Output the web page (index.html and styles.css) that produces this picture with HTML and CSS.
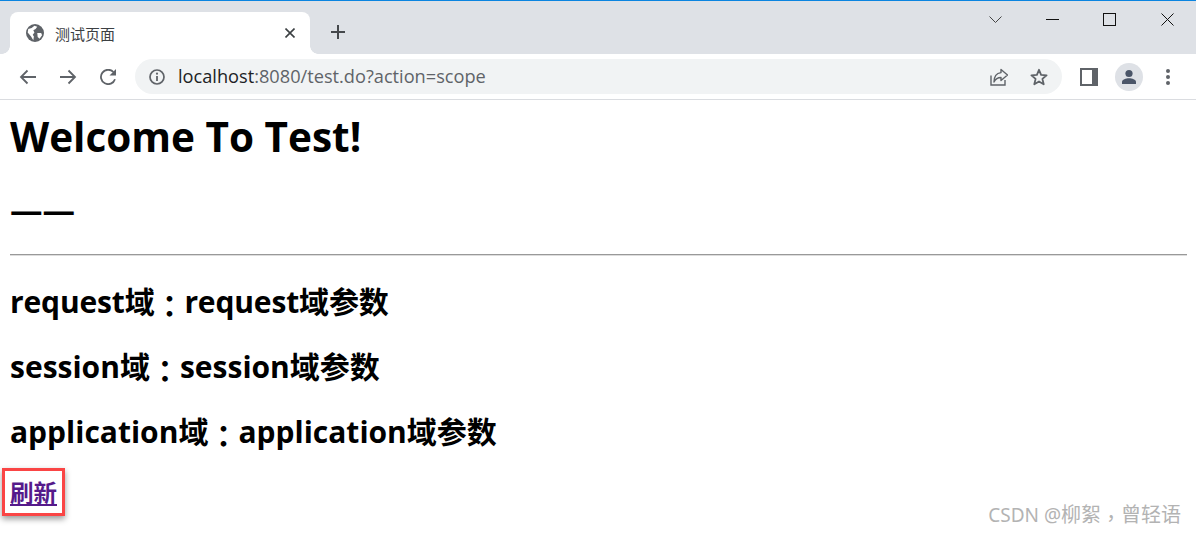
FILE: index.html
```html
<!DOCTYPE html>
<html lang="zh-CN">
<head>
    <meta charset="UTF-8">
    <title>测试页面</title>
    <link rel="stylesheet" href="styles.css">
</head>
<body>

<!-- Tab strip -->
<div class="tabstrip">
    <div class="tab">
        <svg class="tab-icon" width="18" height="18" viewBox="0 0 16 16">
            <circle cx="8" cy="8" r="8" fill="#5f6368"/>
            <path d="M2 4.5 5 3.5 7.5 1.5 10 2.5 8.5 4.5 6.5 5.5 7.5 7.5 6 9.5 7 11 6.5 14.5 4.5 11 1.5 7.5Z" fill="#fff"/>
            <path d="M10 8h3.5l.8 2-2.3 3-1.6-1.5Z" fill="#fff"/>
        </svg>
        <span class="tab-title">测试页面</span>
        <svg class="tab-close" width="10" height="10" viewBox="0 0 10 10">
            <path d="M0.5 0.5 9.5 9.5M9.5 0.5 0.5 9.5" stroke="#3c4043" stroke-width="1.6"/>
        </svg>
    </div>
    <svg class="new-tab" width="14" height="14" viewBox="0 0 14 14">
        <path d="M7 0V14M0 7H14" stroke="#45484c" stroke-width="2"/>
    </svg>
    <div class="window-btns">
        <svg class="win-chevron" width="13" height="7" viewBox="0 0 13 7">
            <path d="M0.5 0.5 6.5 6.5 12.5 0.5" fill="none" stroke="#444" stroke-width="1"/>
        </svg>
        <svg class="win-min" width="13" height="13" viewBox="0 0 13 13">
            <path d="M0 6.5H13" stroke="#111" stroke-width="1"/>
        </svg>
        <svg class="win-max" width="13" height="13" viewBox="0 0 13 13">
            <rect x="0.5" y="0.5" width="12" height="12" fill="none" stroke="#111" stroke-width="1"/>
        </svg>
        <svg class="win-close" width="13" height="13" viewBox="0 0 13 13">
            <path d="M0.5 0.5 12.5 12.5M12.5 0.5 0.5 12.5" stroke="#111" stroke-width="1"/>
        </svg>
    </div>
</div>

<!-- Toolbar -->
<div class="toolbar">
    <svg class="nav-icon" width="18" height="16" viewBox="0 0 18 16">
        <path d="M17 8H2M8.5 1.5 2 8l6.5 6.5" fill="none" stroke="#5f6368" stroke-width="1.8"/>
    </svg>
    <svg class="nav-icon" width="18" height="16" viewBox="0 0 18 16">
        <path d="M1 8H16M9.5 1.5 16 8l-6.5 6.5" fill="none" stroke="#5f6368" stroke-width="1.8"/>
    </svg>
    <svg class="nav-icon" width="18" height="16" viewBox="0 0 18 16">
        <path d="M16 10.2A7.2 7.2 0 1 1 14.4 3" fill="none" stroke="#5f6368" stroke-width="1.8"/>
        <path d="M17 0V6.5H10.5Z" fill="#5f6368"/>
    </svg>
    <div class="omnibox">
        <svg class="info-icon" width="16" height="16" viewBox="0 0 16 16">
            <circle cx="8" cy="8" r="7" fill="none" stroke="#5f6368" stroke-width="1.7"/>
            <path d="M8 7V12" stroke="#5f6368" stroke-width="1.8"/>
            <circle cx="8" cy="4.7" r="1.1" fill="#5f6368"/>
        </svg>
        <span class="url"><span class="url-host">localhost</span>:8080/test.do?action=scope</span>
        <svg class="share-icon" width="18" height="18" viewBox="0 0 18 18">
            <path d="M1 7.5V17H15V12" fill="none" stroke="#5f6368" stroke-width="1.4"/>
            <path d="M11 1.5 17.5 7 11 12.5V9.5C8 9.5 5.5 11 4 14 4 9 6.5 5.2 11 4.6Z" fill="none" stroke="#5f6368" stroke-width="1.4" stroke-linejoin="round"/>
        </svg>
        <svg class="star-icon" width="18" height="18" viewBox="0 0 18 18">
            <path d="M9 1.8 11.1 6.8 16.6 7.3 12.4 10.9 13.7 16.3 9 13.4 4.3 16.3 5.6 10.9 1.4 7.3 6.9 6.8Z" fill="none" stroke="#5f6368" stroke-width="1.8" stroke-linejoin="round"/>
        </svg>
    </div>
    <div class="panel-icon"></div>
    <div class="avatar">
        <svg width="18" height="18" viewBox="0 0 18 18">
            <circle cx="9" cy="5.5" r="3.6" fill="#4a5568"/>
            <path d="M2 16V14C2 11.5 6 10.3 9 10.3S16 11.5 16 14V16Z" fill="#4a5568"/>
        </svg>
    </div>
    <div class="menu-dots"><i></i><i></i><i></i></div>
</div>

<!-- Page content -->
<div class="content">
    <h1>Welcome To Test!</h1>
    <h2 class="dash">——</h2>
    <hr>
    <h2 class="row-request">request域<span class="punct" lang="zh-TW">：</span>request域参数</h2>
    <h2>session域<span class="punct" lang="zh-TW">：</span>session域参数</h2>
    <h2>application域<span class="punct" lang="zh-TW">：</span>application域参数</h2>
    <h2 class="refresh"><a href="#">刷新</a></h2>
</div>

<div class="watermark"><span class="wm-latin">CSDN @</span>柳絮<span class="punct" lang="zh-TW">，</span>曾轻语</div>

</body>
</html>
```

FILE: styles.css
```css
html, body {
    margin: 0;
    padding: 0;
    height: 533px;
    overflow: hidden;
}
body {
    position: relative;
    background-color: #fff;
    font-family: "Open Sans", "Noto Sans CJK SC", sans-serif;
    color: #000;
}
svg {
    display: block;
    flex: none;
}

/* Tab strip */
.tabstrip {
    display: flex;
    align-items: flex-end;
    height: 53px;
    background-color: #dee1e6;
    border-top: 1px solid #0a84e0;
}
.tab {
    position: relative;
    display: flex;
    align-items: center;
    width: 300px;
    height: 42px;
    margin-left: 10px;
    background-color: #fff;
    border-radius: 8px 8px 0 0;
}
.tab::before,
.tab::after {
    content: "";
    position: absolute;
    bottom: 0;
    width: 8px;
    height: 8px;
}
.tab::before {
    left: -8px;
    background: radial-gradient(circle at 0 0, #dee1e6 7.5px, #fff 8px);
}
.tab::after {
    right: -8px;
    background: radial-gradient(circle at 100% 0, #dee1e6 7.5px, #fff 8px);
}
.tab-icon {
    margin-left: 16px;
}
.tab-title {
    margin-left: 11px;
    font-size: 15px;
    color: #3c4043;
    font-family: "Noto Sans CJK SC", sans-serif;
}
.tab-close {
    margin-left: auto;
    margin-right: 15px;
}
.new-tab {
    align-self: center;
    margin: 9px 0 0 21px;
}
.window-btns {
    display: flex;
    align-items: center;
    align-self: flex-start;
    margin-left: auto;
    margin-top: 12px;
    margin-right: 22px;
    gap: 44px;
}
.win-close {
    margin-left: 1px;
}

/* Toolbar */
.toolbar {
    display: flex;
    align-items: center;
    height: 45px;
    background-color: #fff;
    border-bottom: 1px solid #dadce0;
    padding-left: 19px;
}
.nav-icon {
    margin-right: 22px;
}
.omnibox {
    display: flex;
    align-items: center;
    width: 927px;
    height: 35px;
    margin-left: -4px;
    background-color: #f1f3f4;
    border-radius: 18px;
}
.info-icon {
    margin-left: 14px;
}
.url {
    margin: -2px 0 0 13px;
    font-size: 18.2px;
    color: #5f6368;
    font-family: "Open Sans", sans-serif;
}
.url-host {
    color: #202124;
}
.share-icon {
    margin-left: auto;
}
.star-icon {
    margin: 0 14px 0 22px;
}
.panel-icon {
    box-sizing: border-box;
    width: 18px;
    height: 18px;
    margin-left: 18px;
    border: 2px solid #5f6368;
    border-right-width: 6px;
    background-color: #fff;
}
.avatar {
    display: flex;
    align-items: center;
    justify-content: center;
    width: 28px;
    height: 28px;
    margin-left: 17px;
    border-radius: 50%;
    background-color: #dee1e6;
}
.menu-dots {
    display: flex;
    flex-direction: column;
    gap: 2px;
    margin-left: 23px;
}
.menu-dots i {
    display: block;
    width: 4px;
    height: 4px;
    border-radius: 50%;
    background-color: #5f6368;
}

/* Page content */
.content {
    padding: 0 9px 0 10px;
}
h1 {
    margin: 8px 0 0;
    font-size: 40.5px;
    line-height: 58px;
    font-weight: 700;
}
h2 {
    margin: 0;
    font-size: 30px;
    line-height: 44px;
    font-weight: 700;
}
hr {
    margin: 22px 0 24px;
    border: 0;
    border-top: 1px solid #999;
    border-bottom: 1px solid #ddd;
}
.content .dash {
    margin-top: 22px;
    font-size: 32.5px;
}
.content h2 + h2 {
    margin-top: 21px;
}
.row-request {
    letter-spacing: -0.15px;
}
.punct {
    font-family: "Noto Sans CJK TC", sans-serif;
    line-height: 0;
    vertical-align: -4px;
}
.content .refresh {
    display: inline-block;
    margin: 14px 0 0 -8px;
    padding: 0 5px;
    border: 3px solid #fa4545;
    line-height: 39px;
    box-shadow: 0 3px 6px rgba(0, 0, 0, 0.4);
}
.refresh a {
    color: #551a8b;
    font-size: 23.5px;
}

.watermark {
    position: absolute;
    right: 15px;
    bottom: 5px;
    font-size: 20px;
    color: #b3b3b3;
    font-family: "Noto Sans", "Noto Sans CJK SC", sans-serif;
}
.wm-latin {
    font-size: 19px;
}
```
